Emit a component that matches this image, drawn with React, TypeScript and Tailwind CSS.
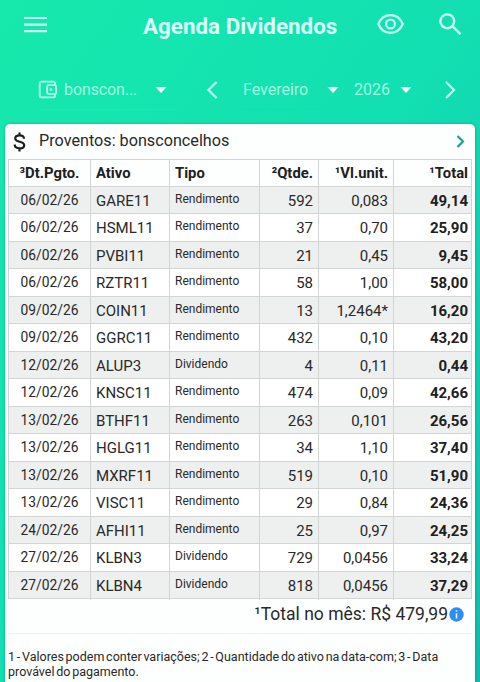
import { useState } from "react";

const rows = [
  { date: "06/02/26", ativo: "GARE11", tipo: "Rendimento", qtde: "592", unit: "0,083", total: "49,14" },
  { date: "06/02/26", ativo: "HSML11", tipo: "Rendimento", qtde: "37", unit: "0,70", total: "25,90" },
  { date: "06/02/26", ativo: "PVBI11", tipo: "Rendimento", qtde: "21", unit: "0,45", total: "9,45" },
  { date: "06/02/26", ativo: "RZTR11", tipo: "Rendimento", qtde: "58", unit: "1,00", total: "58,00" },
  { date: "09/02/26", ativo: "COIN11", tipo: "Rendimento", qtde: "13", unit: "1,2464*", total: "16,20" },
  { date: "09/02/26", ativo: "GGRC11", tipo: "Rendimento", qtde: "432", unit: "0,10", total: "43,20" },
  { date: "12/02/26", ativo: "ALUP3", tipo: "Dividendo", qtde: "4", unit: "0,11", total: "0,44" },
  { date: "12/02/26", ativo: "KNSC11", tipo: "Rendimento", qtde: "474", unit: "0,09", total: "42,66" },
  { date: "13/02/26", ativo: "BTHF11", tipo: "Rendimento", qtde: "263", unit: "0,101", total: "26,56" },
  { date: "13/02/26", ativo: "HGLG11", tipo: "Rendimento", qtde: "34", unit: "1,10", total: "37,40" },
  { date: "13/02/26", ativo: "MXRF11", tipo: "Rendimento", qtde: "519", unit: "0,10", total: "51,90" },
  { date: "13/02/26", ativo: "VISC11", tipo: "Rendimento", qtde: "29", unit: "0,84", total: "24,36" },
  { date: "24/02/26", ativo: "AFHI11", tipo: "Rendimento", qtde: "25", unit: "0,97", total: "24,25" },
  { date: "27/02/26", ativo: "KLBN3", tipo: "Dividendo", qtde: "729", unit: "0,0456", total: "33,24" },
  { date: "27/02/26", ativo: "KLBN4", tipo: "Dividendo", qtde: "818", unit: "0,0456", total: "37,29" },
];

const cols = "grid grid-cols-[82px_79px_90px_59px_75px_79px] divide-x divide-[#d3d5d5] border-b border-[#d3d5d5]";

const Caret = () => (
  <svg className="h-[6px] w-[12px] shrink-0" viewBox="0 0 12 6" fill="#f4fffd">
    <path d="M0.5 0h11L6 6z" />
  </svg>
);

const Header = () => (
  <header className="h-[124px]">
    <div className="flex h-[53px] items-center pl-6 pr-[18px]">
      <button aria-label="menu" className="-mt-1 w-[23px]">
        <svg className="h-[17px] w-[23px]" viewBox="0 0 23 17" fill="none" stroke="#c8fff0" strokeWidth="2.2">
          <path d="M0 2h23M0 8.7h23M0 15.2h23" />
        </svg>
      </button>
      <h1 className="ml-[96px] w-[195px] whitespace-nowrap text-[22.4px] font-bold leading-none text-[#d8fff8]">
        Agenda Dividendos
      </h1>
      <button aria-label="mostrar valores" className="ml-[39px]">
        <svg className="-mt-[6px] h-[20px] w-[27px]" viewBox="0 0 27 20" fill="none" stroke="#c8fff3" strokeWidth="2.2">
          <path d="M1.2 10C3.7 4.4 8.3 1.2 13.5 1.2S23.3 4.4 25.8 10c-2.5 5.6-7.1 8.8-12.3 8.8S3.7 15.6 1.2 10z" />
          <circle cx="13.5" cy="10" r="4.4" />
        </svg>
      </button>
      <button aria-label="buscar" className="ml-auto">
        <svg className="-mt-[5px] h-[22px] w-[23px]" viewBox="0 0 23 22" fill="none" stroke="#c8fff3" strokeWidth="2.4">
          <circle cx="8.3" cy="8.3" r="6.9" />
          <path d="M13.4 13.2l8.1 8" />
        </svg>
      </button>
    </div>

    <div className="mt-[14px] flex h-[43px] items-center">
      <div className="ml-[37px] flex h-full w-[141px] items-center border-b border-[#25e3b5] pt-[3px]">
        <svg className="ml-[1px] h-[19px] w-[20px] shrink-0" viewBox="0 0 20 19" fill="none" stroke="#b9fdec" strokeWidth="1.8">
          <path d="M17 5V3a1.300 1.300 0 0 0-1.300-1.300H3A1.300 1.300 0 0 0 1.700 3v13A1.300 1.300 0 0 0 3 17.300h12.700A1.300 1.300 0 0 0 17 16v-2" />
          <rect x="9.200" y="5.100" width="9" height="8.800" rx="1.300" />
          <circle cx="13" cy="9.500" r="0.600" />
        </svg>
        <span className="ml-[6px] w-[91px] text-[16px] tracking-[-0.1px] text-[#a3f8e1]">bonscon...</span>
        <Caret />
      </div>
      <button aria-label="mes anterior" className="ml-[28px] pt-[2px]">
        <svg className="h-[18px] w-[12px]" viewBox="0 0 12 18" fill="none" stroke="#c0fff0" strokeWidth="2.200">
          <path d="M10.500 1L2.500 9l8 8" />
        </svg>
      </button>
      <div className="ml-[25px] flex h-full w-[106px] items-center border-b border-[#1dd8b0] pt-[3px]">
        <span className="w-[84px] text-[16px] text-[#a3f8e1]">Fevereiro</span>
        <Caret />
      </div>
      <div className="ml-[5px] flex h-full w-[66px] items-center border-b border-[#1bdab2] pt-[3px]">
        <span className="w-[46px] text-[16px] text-[#a3f8e1]">2026</span>
        <Caret />
      </div>
      <button aria-label="proximo mes" className="ml-[24px] pt-[2px]">
        <svg className="h-[18px] w-[12px]" viewBox="0 0 12 18" fill="none" stroke="#c0fff0" strokeWidth="2.200">
          <path d="M2 1l8 8-8 8" />
        </svg>
      </button>
    </div>
  </header>
);

const App = () => {
  const [open, setOpen] = useState(true);

  return (
    <div className="h-[682px] w-[480px] overflow-hidden bg-linear-to-br from-[#17e9ac] via-[#12dfb2] to-[#10bbab] font-[Roboto,sans-serif]">
      <Header />

      <main className="mx-[5px] h-[570px] rounded-[5px] bg-[#fdfefe] px-[3px] text-[#292929] shadow-[0_0_3px_rgba(0,80,60,0.35)]">
        <button onClick={() => setOpen(!open)} className="flex h-[35px] w-full items-center pl-[5px] pr-[7px]">
          <svg className="h-[20px] w-[13px]" viewBox="0 0 13 20" fill="none" stroke="#1c1c1c" strokeWidth="2.200">
            <path d="M6.500 0.500v3M6.500 16v3.500M11 6.800C11 4.500 9.300 3.300 6.600 3.300S2.200 4.700 2.200 6.600c0 4.200 9 2.200 9 6.600 0 2-1.900 3.100-4.600 3.100S1.700 15 1.700 12.600" />
          </svg>
          <span className="ml-[13px] text-[16.200px] leading-none">Proventos: bonsconcelhos</span>
          <svg className="ml-auto h-[13px] w-[9px]" viewBox="0 0 9 13" fill="none" stroke="#16a58f" strokeWidth="2.200">
            <path d="M1.500 1l5.500 5.500L1.500 12" />
          </svg>
        </button>

        {open && (
          <div className="border-x border-t border-[#d3d5d5] text-[15px]">
            <div className={`${cols} h-[27px] items-stretch text-[14.800px] font-bold leading-[27px] text-[#202020]`}>
              <div className="text-center">³Dt.Pgto.</div>
              <div className="pl-[5px]">Ativo</div>
              <div className="pl-[5px]">Tipo</div>
              <div className="pr-[5px] text-right">²Qtde.</div>
              <div className="pr-[5px] text-right">¹Vl.unit.</div>
              <div className="pr-[5px] text-right">¹Total</div>
            </div>
            {rows.map((row) => (
              <div key={row.ativo} className={`${cols} h-[27.470px] leading-[28px] odd:bg-white even:bg-[#eeefef]`}>
                <div className="text-center text-[13.800px] leading-[26px]">{row.date}</div>
                <div className="pl-[5px]">{row.ativo}</div>
                <div className="pl-[5px] text-[12px] leading-[24px]">{row.tipo}</div>
                <div className="pr-[5px] text-right">{row.qtde}</div>
                <div className="pr-[5px] text-right">{row.unit}</div>
                <div className="pr-[5px] text-right font-bold text-[#202020]">{row.total}</div>
              </div>
            ))}
          </div>
        )}

        <div className="flex h-[35px] items-center justify-end border-b border-[#f0f1f1] pr-[8px] text-[17.500px]">
          <span className="-mt-1">¹Total no mês: R$ 479,99</span>
          <svg className="-mt-1 ml-[1px] h-[15px] w-[15px]" viewBox="0 0 15 15">
            <circle cx="7.500" cy="7.500" r="7.200" fill="#2a8ef5" />
            <path d="M7.500 3.200v1.600M7.500 6.200v5.300" stroke="#e8f5ff" strokeWidth="1.600" />
          </svg>
        </div>

        <p className="mt-[15px] whitespace-nowrap text-[12.500px] leading-[15px] [word-spacing:-1.350px]">
          1 - Valores podem conter variações; 2 - Quantidade do ativo na data-com; 3 - Data
          <br />
          provável do pagamento.
        </p>
      </main>
    </div>
  );
};

export default App;
